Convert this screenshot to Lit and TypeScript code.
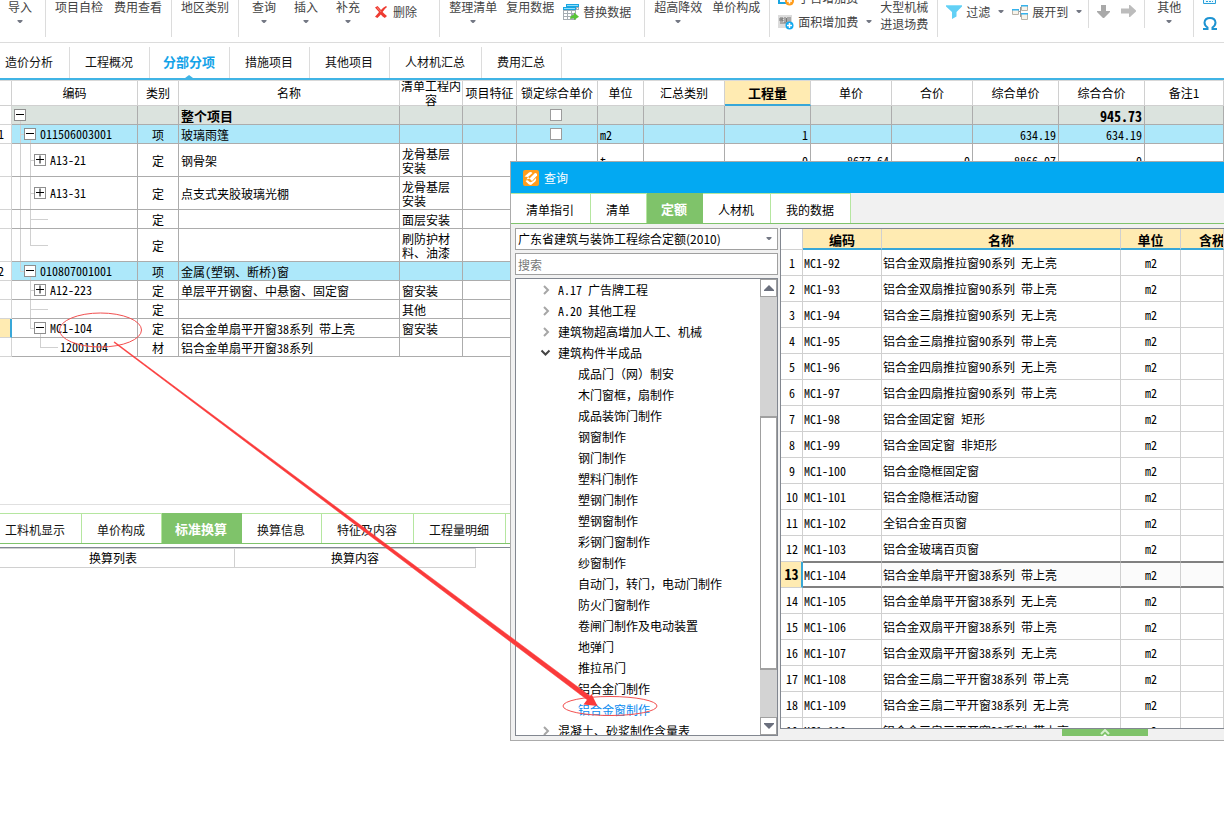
import { LitElement, html, css, svg, nothing } from "lit";
import { customElement, state } from "lit/decorators.js";
import { classMap } from "lit/directives/class-map.js";

interface Item {
  guides: string[];
  toggle?: "plus" | "minus";
  code?: string;
  kind?: string;
  name?: string;
  work?: string;
  lock?: boolean;
  unit?: string;
  qty?: string;
  price?: string;
  total?: string;
  fullPrice?: string;
  fullTotal?: string;
  no?: string;
  tone?: "root" | "item";
  tall?: boolean;
  current?: boolean;
}

const items: Item[] = [
  { guides: [], toggle: "minus", name: "整个项目", lock: true, fullTotal: "945.73", tone: "root" },
  { no: "1", guides: ["tee"], toggle: "minus", code: "011506003001", kind: "项", name: "玻璃雨篷", lock: true, unit: "m2", qty: "1", fullPrice: "634.19", fullTotal: "634.19", tone: "item" },
  { guides: ["bar", "tee"], toggle: "plus", code: "A13-21", kind: "定", name: "钢骨架", work: "龙骨基层安装", unit: "t", qty: "0", price: "8677.64", total: "0", fullPrice: "8866.07", fullTotal: "0", tall: true },
  { guides: ["bar", "tee"], toggle: "plus", code: "A13-31", kind: "定", name: "点支式夹胶玻璃光棚", work: "龙骨基层安装", tall: true },
  { guides: ["bar", "tee"], kind: "定", work: "面层安装" },
  { guides: ["bar", "ell"], kind: "定", work: "刷防护材料、油漆", tall: true },
  { no: "2", guides: ["ell"], toggle: "minus", code: "010807001001", kind: "项", name: "金属(塑钢、断桥)窗", tone: "item" },
  { guides: ["gap", "tee"], toggle: "plus", code: "A12-223", kind: "定", name: "单层平开钢窗、中悬窗、固定窗", work: "窗安装" },
  { guides: ["gap", "tee"], kind: "定", work: "其他" },
  { guides: ["gap", "ell"], toggle: "minus", code: "MC1-104", kind: "定", name: "铝合金单扇平开窗38系列 带上亮", work: "窗安装", current: true },
  { guides: ["gap", "gap", "ell"], code: "12001104", kind: "材", name: "铝合金单扇平开窗38系列" },
];

const quotas: string[] = [
  "铝合金双扇推拉窗90系列 无上亮",
  "铝合金双扇推拉窗90系列 带上亮",
  "铝合金三扇推拉窗90系列 无上亮",
  "铝合金三扇推拉窗90系列 带上亮",
  "铝合金四扇推拉窗90系列 无上亮",
  "铝合金四扇推拉窗90系列 带上亮",
  "铝合金固定窗 矩形",
  "铝合金固定窗 非矩形",
  "铝合金隐框固定窗",
  "铝合金隐框活动窗",
  "全铝合金百页窗",
  "铝合金玻璃百页窗",
  "铝合金单扇平开窗38系列 带上亮",
  "铝合金单扇平开窗38系列 无上亮",
  "铝合金双扇平开窗38系列 带上亮",
  "铝合金双扇平开窗38系列 无上亮",
  "铝合金三扇二平开窗38系列 带上亮",
  "铝合金三扇二平开窗38系列 无上亮",
  "铝合金三扇三平开窗38系列 带上亮",
];

const chapters: { label: string; kind: "closed" | "open" | "leaf" }[] = [
  { label: "A.17 广告牌工程", kind: "closed" },
  { label: "A.20 其他工程", kind: "closed" },
  { label: "建筑物超高增加人工、机械", kind: "closed" },
  { label: "建筑构件半成品", kind: "open" },
  ...[
    "成品门（网）制安", "木门窗框，扇制作", "成品装饰门制作", "钢窗制作", "钢门制作",
    "塑料门制作", "塑钢门制作", "塑钢窗制作", "彩钢门窗制作", "纱窗制作",
    "自动门，转门，电动门制作", "防火门窗制作", "卷闸门制作及电动装置", "地弹门",
    "推拉吊门", "铝合金门制作", "铝合金窗制作",
  ].map((label) => ({ label, kind: "leaf" as const })),
  { label: "混凝土、砂浆制作含量表", kind: "closed" },
];

/* Latin runs are set half as wide as the ideographs around them. */
const mixed = (text = "") =>
  text.split(/([\x20-\x7e]+)/).map((part, i) => (i % 2 ? html`<span class="half">${part}</span>` : part));

const base = css`
  *, *::before, *::after { box-sizing: border-box; }
  :host {
    font-family: "Noto Sans CJK SC", "Liberation Sans", sans-serif;
    font-size: 12px;
    line-height: 14px;
    color: #000;
  }
  button, input, select { font: inherit; color: inherit; margin: 0; padding: 0; border: 0; border-radius: 0; background: none; }
  svg { display: block; flex: none; }
  .half { font-family: "Noto Sans Mono CJK SC", "DejaVu Sans Mono", monospace; white-space: pre; }
  table { width: 100%; table-layout: fixed; border-spacing: 0; }
  th, td { padding: 0; font-weight: normal; white-space: nowrap; overflow: hidden; }
  .center { text-align: center; }
`;

const caret = html`<svg class="caret" width="6" height="4" viewBox="0 0 6 4"><path d="M.5 0h5v1L3.500 3h-1L.5 1z" fill="#747884" /></svg>`;

@customElement("tool-bar")
class ToolBar extends LitElement {
  static styles = [base, css`
    :host { display: block; border-bottom: 1px solid #dcdcdc; color: #444; }
    .bar { display: flex; align-items: flex-start; height: 42px; overflow: hidden; }
    .group { display: flex; align-items: flex-start; flex: none; height: 37px; padding: 0 9px; gap: 10px; border-right: 1px solid #dcdcdc; }
    .short { height: 28px; }
    .first { padding: 0 13px 0 8px; }
    .check { gap: 11px; }
    .edit { padding: 0 22px 0 13px; gap: 18px; }
    .edit .side { margin-left: -3px; gap: 6px; }
    .list { padding-right: 13px; gap: 9px; }
    .fees { padding-left: 8px; }
    .fees, .view { gap: 8px; }
    .view { padding: 0 6px 0 8px; height: 28px; }
    .moves { padding: 5px 8px 0; gap: 11px; }
    .other { padding: 0 12px; }
    .last { border: 0; flex-direction: column; gap: 9px; }
    button { display: flex; flex: none; align-items: center; white-space: nowrap; line-height: 16px; }
    .stack { flex-direction: column; gap: 6px; line-height: 14px; }
    .stack.two { gap: 3px; }
    .side { gap: 4px; margin-top: 4px; }
    .rows { display: flex; flex-direction: column; gap: 8px; margin-top: -10px; }
    .rows .side { margin: 0; }
    .split { margin: 20px 0 0; }
    .mid { margin: 10px 0 0; }
  `];

  private plain(label: string, menu = false) {
    return html`<button class="stack">${label}${menu ? caret : nothing}</button>`;
  }

  render() {
    return html`<nav class="bar" aria-label="工具栏">
      <div class="group first">${this.plain("导入", true)}</div>
      <div class="group check">${this.plain("项目自检")}${this.plain("费用查看")}</div>
      <div class="group">${this.plain("地区类别")}</div>
      <div class="group edit">
        ${this.plain("查询", true)}${this.plain("插入", true)}${this.plain("补充", true)}
        <button class="side">
          <svg width="12" height="12" viewBox="0 0 12 12"><path d="M0 1.6 2.6 0Q4.5 1.8 6 4 8 1.5 11 0L12 1Q9 3.4 7.6 6 9.4 8 12 10L9.8 12Q7.4 10.4 5.8 8.4 4.4 10 2.4 12L0 10.8Q2.2 8.6 4 6.1 2 4 0 1.6z" fill="#ee3b31" /><path d="M2 1.6Q4 3.4 6 5.8" stroke="#ff8b80" fill="none" /></svg>
          删除
        </button>
      </div>
      <div class="group list">
        ${this.plain("整理清单", true)}${this.plain("复用数据")}
        <button class="side">
          <svg width="16" height="16" viewBox="0 0 16 16"><path d="M3 0h13v6h-3v10H0V3h3z" fill="#a6adb3" /><path d="M3 0h13v3H3zM0 3h13v3H0z" fill="#19a5e1" /><path d="M4 1h11v1H4zM1 4h11v1H1z" fill="#8fe0fb" /><path d="M1 7h3v2H1zm4 0h3v2H5zm4 0h3v2H9zM1 10h3v2H1zm4 0h3v2H5zm-4 3h3v2H1zm4 0h3v2H5zM14 4h1v1h-1z" fill="#fff" /><path d="M7 15q0-4 4-4V8.500l5 4.300-5 3.200v-2q-2 0-4 1z" fill="#58c437" /></svg>
          替换数据
        </button>
      </div>
      <div class="group">${this.plain("超高降效", true)}${this.plain("单价构成")}</div>
      <div class="group fees">
        <div class="rows">
          <button class="side">
            <svg width="16" height="16" viewBox="0 0 16 16"><path d="M1 1h13v12H1z" fill="#fff" stroke="#19a5e1" stroke-width="2" /><path d="M4 5h7M4 9h7" stroke="#19a5e1" /><circle cx="11.500" cy="11" r="4.500" fill="#ff9c1b" /><path d="M11.500 8.500v5M9 11h5" stroke="#fff" stroke-width="1.500" /></svg>
            子目增加费
          </button>
          <button class="side">
            <svg width="16" height="16" viewBox="0 0 16 16"><path d="M0 1h14v13H0z" fill="#dcdcdc" /><path d="M2 4h3v1H3v1h2v1H2zm5-1v6M10 3v6M2 9h10M8.500 4v4M12 3v5" fill="none" stroke="#777" /><circle cx="11.500" cy="11.500" r="4" fill="#13aaf0" /><path d="M11.500 9v5M9 11.500h5" stroke="#fff" stroke-width="1.500" /></svg>
            面积增加费
          </button>
        </div>
        <button class="split" aria-label="更多增加费">${caret}</button>
        <button class="stack two"><span>大型机械</span><span>进退场费</span></button>
      </div>
      <div class="group view">
        <button class="side">
          <svg width="16" height="14" viewBox="0 0 16 14"><path d="M0 0h16v1.500L10.500 7v4.500L6 14V7L0 1.500z" fill="#62d0f5" /><path d="M0 0h16v1H0z" fill="#8adffa" /></svg>
          过滤
        </button>
        <button class="mid" aria-label="过滤选项">${caret}</button>
        <button class="side">
          <svg width="16" height="15" viewBox="0 0 16 15"><path d="M6 6.500h3M8.500 2.500v9M8 2.500h2m-2 9h2" stroke="#999" fill="none" /><path d="M.5 4.500h6v5h-6zM9.500.500h6v5h-6zM9.500 8.500h6v6h-6z" fill="#f7f3ea" stroke="#b8b2a8" /><path d="M0 4h7v1.500H0zM9 0h7v1.500H9zM9 8h7v1.500H9z" fill="#35b2ec" /></svg>
          展开到
        </button>
        <button class="mid" aria-label="展开选项">${caret}</button>
      </div>
      <div class="group short moves">
        <button aria-label="下移"><svg width="13" height="13" viewBox="0 0 13 13"><path d="M4 0v6H0v1l6 6h1l6-6V6H9V0z" fill="#a9a9a9" /></svg></button>
        <button aria-label="右移"><svg width="15" height="12" viewBox="0 0 15 12"><path d="M0 3.500h8V0h1l6 5.500v1L9 12H8V8.500H0z" fill="#bcbcbc" /></svg></button>
      </div>
      <div class="group other">${this.plain("其他", true)}</div>
      <div class="group last">
        <button aria-label="计算器"><svg width="13" height="8" viewBox="0 0 13 8"><path d="M.5-4v7.500h12V-4" fill="#eefaff" stroke="#2aa0da" /><path d="M3 1.500h7" stroke="#2aa0da" stroke-dasharray="2 1" /></svg></button>
        <button aria-label="特殊符号"><svg width="14" height="13" viewBox="0 0 14 13"><path d="M0 12h4.500v-1.500Q1.500 8.500 1.500 5.500 2 1 7 1t5.500 4.500q0 3-3 5V12H14" fill="none" stroke="#1d93d2" stroke-width="2" /></svg></button>
      </div>
    </nav>`;
  }
}

@customElement("bill-grid")
class BillGrid extends LitElement {
  static styles = [base, css`
    :host { display: block; border-top: 1px solid #d8d8d8; overflow: hidden; }
    .c-no { width: 12px; } .c-code { width: 126px; } .c-kind { width: 41px; } .c-name { width: 221px; }
    .c-work { width: 63px; } .c-feature { width: 54px; } .c-wide { width: 81px; } .c-unit { width: 46px; }
    .c-sum { width: 86px; }
    th { height: 25px; border-right: 1px solid #d0d0d0; border-bottom: 1px solid #d0d0d0; overflow: visible; }
    .label { display: flex; align-items: center; justify-content: center; height: 24px; white-space: normal; }
    .nowrap { white-space: nowrap; }
    th.active { background: #ffebb2; border-bottom: 2px solid #38a7d8; font-weight: bold; font-size: 13px; }
    th.active .label { height: 23px; }
    td { height: 19px; border-right: 1px solid #acacac; border-bottom: 1px solid #acacac; }
    .tall td { height: 33px; }
    td.no { border-color: #d4d4d4; text-indent: -2px; }
    .root td:not(.no) { background: #dbe3de; font-weight: bold; font-size: 13px; }
    .root .half { font-size: 14px; }
    .item td:not(.no) { background: #ade8fa; }
    .current td.no { background: #ffebb2; border-right: 2px solid #38a7d8; }
    .kind { padding-top: 2px; text-align: center; }
    .text { padding: 2px 0 0 2px; }
    .work { padding: 2px 12px 0 2px; white-space: normal; }
    .num { text-align: right; padding: 2px 2px 0 0; }
    .tree { display: flex; align-items: center; height: 18px; padding-left: 3px; }
    .tall .tree { height: 32px; }
    .guide { --line: linear-gradient(#d0d0d0, #d0d0d0); align-self: stretch; flex: none; width: 10px; background-repeat: no-repeat; }
    .bar { background-image: var(--line); background-position: 5px 0; background-size: 1px 100%; }
    .tee { background-image: var(--line), var(--line); background-position: 5px 0, 5px 50%; background-size: 1px 100%, 5px 1px; }
    .ell { background-image: var(--line), var(--line); background-position: 5px 0, 5px 50%; background-size: 1px 50%, 5px 1px; }
    .stub { flex: none; width: 13px; height: 1px; margin-right: 2px; background: #d0d0d0; }
    .knot { display: flex; align-items: center; align-self: stretch; flex: none; width: 12px; margin: 0 4px 0 -1px; }
    .knot.open { background: linear-gradient(#d0d0d0, #d0d0d0) 6px 100% / 1px 50% no-repeat; }
    .knot button { width: 12px; height: 12px; border: 1px solid #8e8e8e; background: #fff; }
    .lock { display: block; appearance: none; width: 12px; height: 12px; margin: 0 auto 0 33px; border: 1px solid #9c9c9c; background: #fff; }
  `];

  private row(r: Item) {
    const num = (v?: string) => html`<td class="num">${mixed(v)}</td>`;
    return html`<tr class=${classMap({ root: r.tone === "root", item: r.tone === "item", tall: !!r.tall, current: !!r.current })}>
      <td class="no">${mixed(r.no)}</td>
      <td>
        <div class="tree">
          ${r.guides.map((g) => html`<span class="guide ${g}"></span>`)}
          ${r.toggle
            ? html`<span class=${classMap({ knot: true, open: r.toggle === "minus" })}>
                <button aria-label=${r.toggle === "plus" ? "展开" : "折叠"}>
                  <svg width="10" height="10" viewBox="0 0 10 10"><path d=${r.toggle === "plus" ? "M1 4.500h8M5 .500v8" : "M1 4.500h8"} stroke="#000" /></svg>
                </button></span>`
            : html`<span class="stub"></span>`}
          ${mixed(r.code)}
        </div>
      </td>
      <td class="kind">${r.kind}</td>
      <td class="text">${mixed(r.name)}</td>
      <td class="work">${r.work}</td>
      <td></td>
      <td>${r.lock ? html`<input class="lock" type="checkbox" aria-label="锁定综合单价" />` : nothing}</td>
      <td class="text">${mixed(r.unit)}</td>
      <td></td>
      ${num(r.qty)}${num(r.price)}${num(r.total)}${num(r.fullPrice)}${num(r.fullTotal)}
      <td></td>
    </tr>`;
  }

  render() {
    const heads = ["", "编码", "类别", "名称", "清单工程内容", "项目特征", "锁定综合单价", "单位", "汇总类别", "工程量", "单价", "合价", "综合单价", "综合合价", "备注1"];
    const cols = ["no", "code", "kind", "name", "work", "feature", "wide", "unit", "wide", "sum", "wide", "wide", "sum", "sum", "note"];
    return html`<table>
      <colgroup>${cols.map((c) => html`<col class="c-${c}" />`)}</colgroup>
      <thead><tr>${heads.map((h) => html`<th class=${classMap({ active: h === "工程量" })} scope="col">
        <div class=${classMap({ label: true, nowrap: h !== "清单工程内容" })}>${h}</div></th>`)}</tr></thead>
      <tbody>${items.map((r) => this.row(r))}</tbody>
    </table>`;
  }
}

@customElement("query-dialog")
class QueryDialog extends LitElement {
  @state() private tab = "定额";
  @state() private chapter = "铝合金窗制作";

  static styles = [base, css`
    :host { display: block; border: 1px solid #ababab; border-right: 0; background: #f1f1f1; overflow: hidden; }
    .title { display: flex; align-items: center; gap: 5px; height: 31px; padding-left: 12px; background: #03a9f2; color: #fff; }
    .tabs { display: flex; height: 31px; border-bottom: 1px solid #7fc36c; }
    .tab { flex: none; padding: 2px 16px 0 15px; background: #fff; border-top: 1px solid #b5e6a0; border-right: 1px solid #b5e6a0; }
    .tab.on { padding: 0 15px 0 14px; background: #7fc36a; border-color: #7fc36a; color: #fff; font-weight: bold; font-size: 13px; }
    .body { display: flex; gap: 2px; padding: 4px 0 4px 4px; }
    .left { display: flex; flex-direction: column; flex: none; gap: 3px; width: 263px; }
    .pick { display: flex; align-items: center; height: 22px; border: 1px solid #a0a0a0; background: #fff; }
    .pick select { flex: 1; min-width: 0; appearance: none; padding-left: 2px; height: 20px; }
    .pick .caret { margin-right: 5px; }
    .find { height: 22px; border: 1px solid #a0a0a0; background: #fff; padding-left: 2px; }
    .find::placeholder { color: #777; opacity: 1; }
    .outline { display: flex; flex: none; height: 458px; border: 1px solid #828790; background: #fff; }
    .list { flex: 1; margin: 0; padding: 0; list-style: none; overflow: hidden; }
    .node { display: flex; align-items: center; gap: 7px; height: 21px; padding: 1px 0 0 24px; width: 100%; text-align: left; white-space: nowrap; }
    .leaf { padding-left: 62px; }
    .node.on { color: #0a8cf0; }
    .scroll { display: flex; flex-direction: column; flex: none; width: 17px; background: #d3d3d3; }
    .step { display: flex; align-items: center; justify-content: center; height: 18px; border: 1px solid #a0a0a0; background: #fff; }
    .thumb { height: 254px; margin: 119px 0 auto; border: 1px solid #a0a0a0; border-top-width: 2px; border-bottom-width: 2px; background: #fff; }
    .right { flex: 1; min-width: 0; }
    .grid { height: 501px; overflow: hidden; border: 1px solid #828790; border-right: 0; background: #fff; }
    .q-no { width: 22px; } .q-code { width: 79px; } .q-name { width: 239px; } .q-unit { width: 60px; }
    th { height: 21px; padding: 2px 0 0; line-height: 13px; border-right: 1px solid #d0d0d0; border-bottom: 2px solid #38a7d8; background: #ffebb2; font-size: 13px; font-weight: bold; }
    th.blank { background: #fff; border-bottom: 1px solid #d0d0d0; }
    th.tax { text-align: left; padding-left: 18px; }
    td { height: 26px; padding-left: 1px; border-right: 1px solid #d0d0d0; border-bottom: 1px solid #d0d0d0; }
    .before td:not(.no) { border-bottom-color: #808080; }
    .chosen td { background: #fbfbfb; border-top: 1px solid #808080; border-bottom: 2px solid #808080; }
    .chosen .code { background: #fff; }
    .chosen td.no { background: #ffebb2; border-top: 0; border-right: 2px solid #38a7d8; border-bottom: 1px solid #d0d0d0; font-weight: bold; }
    .chosen .no .half { font-size: 14px; }
    .fold { display: flex; justify-content: center; width: 86px; height: 7px; margin-left: 282px; background: #7fc36a; }
  `];

  render() {
    const chosen = 12;
    return html`
      <div class="title">
        <svg width="16" height="16" viewBox="0 0 16 16"><rect width="16" height="16" rx="2" fill="#ff9d1c" /><path d="M1.500 6.500 6 2.500q2-1 3.500.5L5 7zM5 7 3.500 9.500 7 8.500z" fill="#fff" /><path d="M6.500 8.500 12 3q2.500 0 2 2.500L9 11z" fill="#fff" /><path d="M2.500 11q2-1.500 3.500.5Q8 13 10 11l3-3q.5 3-2 4.500L8 15l-2-.5Q4 12.500 2.500 11z" fill="#fff" /></svg>
        <span>查询</span>
      </div>
      <div class="tabs" role="tablist">
        ${["清单指引", "清单", "定额", "人材机", "我的数据"].map((t) => html`<button role="tab" class=${classMap({ tab: true, on: t === this.tab })} @click=${() => (this.tab = t)}>${t}</button>`)}
      </div>
      <div class="body">
        <div class="left">
          <div class="pick"><select aria-label="定额库"><option>广东省建筑与装饰工程综合定额(2010)</option></select>${caret}</div>
          <input class="find" type="search" placeholder="搜索" aria-label="搜索" />
          <div class="outline">
            <ul class="list">
              ${chapters.map((c) => html`<li><button class=${classMap({ node: true, leaf: c.kind === "leaf", on: c.label === this.chapter })} @click=${() => (this.chapter = c.label)}>
                ${c.kind === "leaf" ? nothing : html`<svg width="11" height="10" viewBox="0 0 11 10">${c.kind === "open"
                  ? svg`<path d="M1.500 2.500 5.500 6.500 9.500 2.500" fill="none" stroke="#444" stroke-width="2" />`
                  : svg`<path d="M4 1 8 5 4 9" fill="none" stroke="#a6a6a6" stroke-width="2" />`}</svg>`}
                <span>${mixed(c.label)}</span></button></li>`)}
            </ul>
            <div class="scroll">
              <button class="step" aria-label="向上"><svg width="10" height="6" viewBox="0 0 10 6"><path d="M5 0 10 5v1H0V5z" fill="#6a6f7d" /></svg></button>
              <div class="thumb"></div>
              <button class="step" aria-label="向下"><svg width="10" height="6" viewBox="0 0 10 6"><path d="M0 0h10v1L5 6 0 1z" fill="#6a6f7d" /></svg></button>
            </div>
          </div>
        </div>
        <div class="right">
          <div class="grid">
            <table>
              <colgroup><col class="q-no" /><col class="q-code" /><col class="q-name" /><col class="q-unit" /><col /></colgroup>
              <thead><tr><th class="blank"></th><th scope="col">编码</th><th scope="col">名称</th><th scope="col">单位</th><th class="tax" scope="col">含税</th></tr></thead>
              <tbody>${quotas.map((name, i) => html`<tr class=${classMap({ before: i === chosen - 1, chosen: i === chosen })}>
                <td class="no center">${mixed(String(i + 1))}</td>
                <td class="code">${mixed(`MC1-${92 + i}`)}</td>
                <td>${mixed(name)}</td>
                <td class="center">${mixed("m2")}</td>
                <td></td></tr>`)}</tbody>
            </table>
          </div>
          <button class="fold" aria-label="展开详情"><svg width="10" height="7" viewBox="0 0 10 7"><path d="M1 5 5 1 9 5" fill="none" stroke="#d7f0cf" stroke-width="2" /><path d="M3 7 5 5 7 7z" fill="#fff" /></svg></button>
        </div>
      </div>`;
  }
}

@customElement("app-root")
class AppRoot extends LitElement {
  @state() private page = "分部分项";
  @state() private detail = "标准换算";

  static styles = [base, css`
    :host { display: block; position: relative; min-height: 100vh; background: #fff; overflow: hidden; }
    .pages { display: flex; height: 37px; padding-top: 4px; border-bottom: 2px solid #40b4e5; }
    .page { display: flex; flex-direction: column; align-items: center; justify-content: flex-end; gap: 6px; flex: none; padding: 0 16px 0 15px; border-right: 1px solid #dcdcdc; color: #111; }
    .page:first-child, .detail:first-child { padding-left: 5px; }
    .page::after { content: ""; width: 8px; height: 3px; }
    .page.on { padding: 0 14px 0 13px; color: #14a3e8; font-weight: bold; font-size: 13px; }
    .page.on::after { background: #40b4e5; clip-path: polygon(50% 0, 100% 100%, 0 100%); }
    .sheet { min-height: 425px; border-bottom: 1px solid #e0e0e0; }
    .details { display: flex; height: 31px; margin-top: 8px; border-bottom: 1px solid #7fc36c; }
    .detail { flex: none; padding: 2px 16px 0 15px; border-top: 1px solid #b5e6a0; border-right: 1px solid #b5e6a0; color: #111; }
    .detail.on { padding: 0 14px 0 13px; background: #7fc36a; border-color: #7fc36a; color: #fff; font-weight: bold; font-size: 13px; }
    .rest { flex: 1; border-top: 1px solid #b5e6a0; }
    .convert { margin-top: 3px; border-top: 1px solid #808791; }
    .convert table { width: 476px; }
    .convert th { height: 20px; border: 1px solid #d0d0d0; border-left: 0; }
    .convert .from { width: 235px; padding-right: 8px; }
    .dialog { position: absolute; top: 161px; left: 510px; right: 0; }
    .marks { position: absolute; top: 0; left: 0; pointer-events: none; }
  `];

  render() {
    return html`
      <tool-bar></tool-bar>
      <div class="pages" role="tablist">
        ${["造价分析", "工程概况", "分部分项", "措施项目", "其他项目", "人材机汇总", "费用汇总"].map((t) => html`<button role="tab" class=${classMap({ page: true, on: t === this.page })} @click=${() => (this.page = t)}>${t}</button>`)}
      </div>
      <main class="sheet"><bill-grid></bill-grid></main>
      <div class="details" role="tablist">
        ${["工料机显示", "单价构成", "标准换算", "换算信息", "特征及内容", "工程量明细"].map((t) => html`<button role="tab" class=${classMap({ detail: true, on: t === this.detail })} @click=${() => (this.detail = t)}>${t}</button>`)}
        <span class="rest"></span>
      </div>
      <section class="convert">
        <table><thead><tr><th class="from" scope="col">换算列表</th><th scope="col">换算内容</th></tr></thead></table>
      </section>
      <query-dialog class="dialog" role="dialog" aria-label="查询"></query-dialog>
      <svg class="marks" width="700" height="740" viewBox="0 0 700 740" aria-hidden="true">
        <ellipse cx="100.500" cy="330" rx="41" ry="17" fill="none" stroke="#f25050" />
        <ellipse cx="610" cy="706" rx="47" ry="9.500" fill="none" stroke="#f25050" />
        <path d="M114 342.500 114.500 341.800 590 696 587.500 700z" fill="#fa3a3a" stroke="#fa3a3a" stroke-width=".5" />
        <path d="M597.500 706 591.500 694 588 698.500 583.500 704.500z" fill="#fa3a3a" />
      </svg>`;
  }
}
